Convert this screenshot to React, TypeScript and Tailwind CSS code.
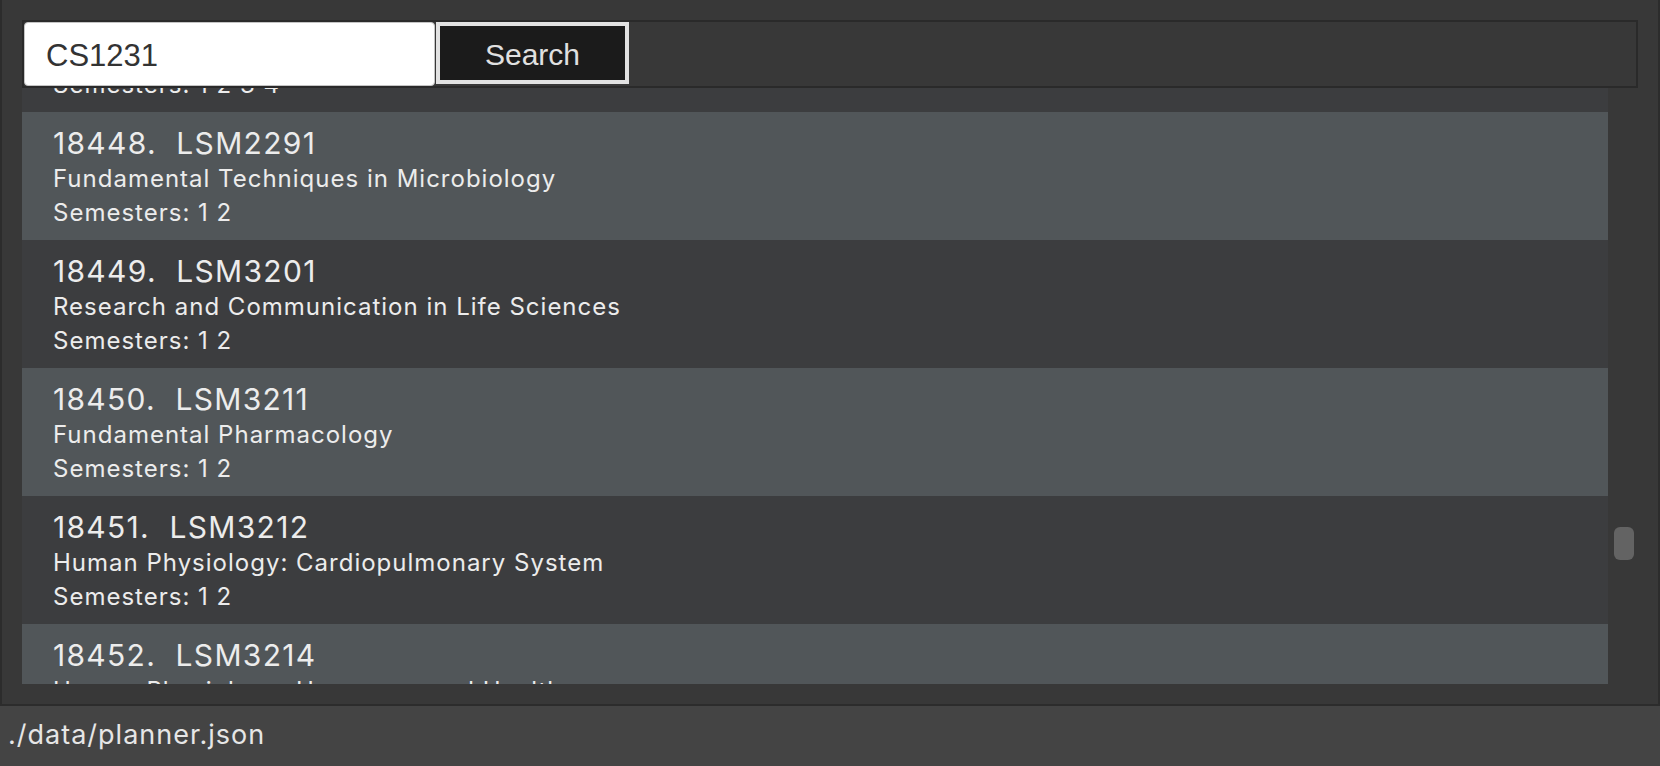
const modules = [
  { n: 18447, code: "LSM2241", title: "Introductory Bioinformatics", sems: "1 2 3 4" },
  { n: 18448, code: "LSM2291", title: "Fundamental Techniques in Microbiology", sems: "1 2" },
  { n: 18449, code: "LSM3201", title: "Research and Communication in Life Sciences", sems: "1 2" },
  { n: 18450, code: "LSM3211", title: "Fundamental Pharmacology", sems: "1 2" },
  { n: 18451, code: "LSM3212", title: "Human Physiology: Cardiopulmonary System", sems: "1 2" },
  { n: 18452, code: "LSM3214", title: "Human Physiology: Hormones and Health", sems: "1 2" },
];

export default function App() {
  return (
    <div className="w-[1660px] h-[766px] flex flex-col bg-[#383838] overflow-hidden font-['Inter',sans-serif]">
      {/* Main frame */}
      <div className="h-[706px] flex flex-col border-x-2 border-b-2 border-[#2c2c2c] px-[20px] pt-[20px]">
        {/* Search toolbar */}
        <div className="h-[68px] flex items-start gap-[1px] border-2 border-[#2a2a2a]">
          <input
            defaultValue="CS1231"
            className="w-[411px] h-[64px] bg-white rounded-[4px] border border-[#c4c4c4] pl-[21px] pt-[3px] text-[31px] text-[#333333] font-['Liberation_Sans',sans-serif] outline-none"
          />
          <button className="w-[193px] h-[62px] bg-[#1b1b1b] border-4 border-[#e2e2e2] pt-[2px] text-[30px] text-[#e0e0e0] font-['Liberation_Sans',sans-serif]">
            Search
          </button>
        </div>

        {/* Module list + scrollbar */}
        <div className="h-[596px] flex">
          <div className="w-[1586px] h-full overflow-hidden bg-[#3c3d3f]">
            <div className="-mt-[104px]">
              {modules.map((m, i) => (
                <div
                  key={m.n}
                  className={`h-[128px] pl-[31px] pt-[12px] text-[#ececec] ${
                    i % 2 === 1 ? "bg-[#515659]" : "bg-[#3c3d3f]"
                  }`}
                >
                  <div className="text-[30px] leading-[38px] tracking-[1.3px] whitespace-pre">
                    {m.n}.  {m.code}
                  </div>
                  <div className="text-[24px] leading-[34px] tracking-[1px]">{m.title}</div>
                  <div className="text-[24px] leading-[34px] tracking-[1px]">Semesters: {m.sems}</div>
                </div>
              ))}
            </div>
          </div>
          <div className="w-[30px] h-full pl-[6px] pt-[439px]">
            <div className="w-[20px] h-[33px] rounded-[6px] bg-[#636363]" />
          </div>
        </div>
      </div>

      {/* Status bar */}
      <div className="flex-1 bg-[#444444] pl-[8px] pt-[12px] text-[27px] leading-[34px] tracking-[1px] text-[#e6e6e6]">
        ./data/planner.json
      </div>
    </div>
  );
}
